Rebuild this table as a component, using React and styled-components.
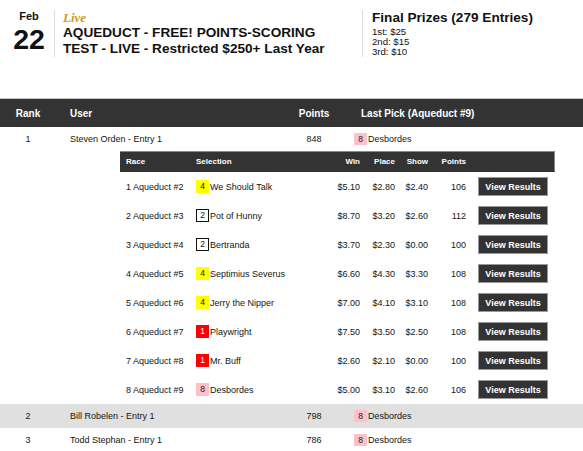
import React from "react";
import styled, { createGlobalStyle } from "styled-components";

const GlobalStyle = createGlobalStyle`
  body {
    margin: 0;
    background: #fff;
    font-family: "Liberation Sans", Arial, sans-serif;
    color: #151515;
  }
`;

const saddle = {
  1: { bg: "#ff0000", fg: "#fff", border: "#ff0000" },
  2: { bg: "#fff", fg: "#111", border: "#111" },
  4: { bg: "#ffff00", fg: "#111", border: "#ffff00" },
  8: { bg: "#ffc0cb", fg: "#222", border: "#ffc0cb" },
};

const picks = [
  { race: "1 Aqueduct #2", pp: 4, horse: "We Should Talk", win: "$5.10", place: "$2.80", show: "$2.40", points: 106 },
  { race: "2 Aqueduct #3", pp: 2, horse: "Pot of Hunny", win: "$8.70", place: "$3.20", show: "$2.60", points: 112 },
  { race: "3 Aqueduct #4", pp: 2, horse: "Bertranda", win: "$3.70", place: "$2.30", show: "$0.00", points: 100 },
  { race: "4 Aqueduct #5", pp: 4, horse: "Septimius Severus", win: "$6.60", place: "$4.30", show: "$3.30", points: 108 },
  { race: "5 Aqueduct #6", pp: 4, horse: "Jerry the Nipper", win: "$7.00", place: "$4.10", show: "$3.10", points: 108 },
  { race: "6 Aqueduct #7", pp: 1, horse: "Playwright", win: "$7.50", place: "$3.50", show: "$2.50", points: 108 },
  { race: "7 Aqueduct #8", pp: 1, horse: "Mr. Buff", win: "$2.60", place: "$2.10", show: "$0.00", points: 100 },
  { race: "8 Aqueduct #9", pp: 8, horse: "Desbordes", win: "$5.00", place: "$3.10", show: "$2.60", points: 106 },
];

const entries = [
  { rank: 1, user: "Steven Orden - Entry 1", points: 848, pp: 8, horse: "Desbordes", open: true },
  { rank: 2, user: "Bill Robelen - Entry 1", points: 798, pp: 8, horse: "Desbordes" },
  { rank: 3, user: "Todd Stephan - Entry 1", points: 786, pp: 8, horse: "Desbordes" },
];

const Page = styled.div`
  width: 583px;
`;

const Header = styled.div`
  display: flex;
  align-items: flex-start;
  height: 98px;
  padding-top: 10px;
  box-sizing: border-box;
`;

const DateBlock = styled.div`
  width: 50px;
  margin-left: 4px;
  height: 47px;
  border-right: 1px solid #ddd;
  display: flex;
  flex-direction: column;
  align-items: center;
  font-weight: bold;
  color: #111;
`;

const Month = styled.div`
  font-size: 11px;
  line-height: 13px;
`;

const Day = styled.div`
  font-size: 28.5px;
  line-height: 28px;
  margin-top: 2px;
`;

const TitleBlock = styled.div`
  width: 307px;
  height: 47px;
  padding-left: 8px;
  box-sizing: border-box;
`;

const LiveTag = styled.div`
  font-family: "Liberation Serif", "DejaVu Serif", serif;
  font-style: italic;
  font-weight: bold;
  font-size: 13px;
  line-height: 15px;
  color: #d19d1c;
`;

const Title = styled.div`
  font-size: 13.6px;
  line-height: 16px;
  font-weight: bold;
  color: #111;
`;

const PrizeBlock = styled.div`
  height: 47px;
  padding-left: 9px;
  border-left: 1px solid #ddd;
`;

const PrizeTitle = styled.div`
  font-size: 13.6px;
  line-height: 16px;
  font-weight: bold;
  color: #111;
`;

const PrizeList = styled.div`
  margin-top: 1px;
  font-size: 9.6px;
  line-height: 10px;
  color: #111;
`;

const Board = styled.table`
  width: 583px;
  border-collapse: collapse;
  table-layout: fixed;
`;

const HeadCell = styled.th`
  height: 28px;
  padding: 0 0 0 ${({ $pad }) => $pad || 0}px;
  background: #333;
  border-top: 1px solid #c4c4c4;
  color: #fff;
  font-size: 10px;
  font-weight: bold;
  text-align: ${({ $align }) => $align || "left"};
`;

const Row = styled.tr`
  background: ${({ $shade }) => ($shade ? "#e0e0e1" : "#fff")};
`;

const Cell = styled.td`
  height: 24px;
  padding: 0 0 0 ${({ $pad }) => $pad || 0}px;
  font-size: 9px;
  text-align: ${({ $align }) => $align || "left"};
  vertical-align: middle;
  white-space: nowrap;
`;

const DetailCell = styled.td`
  padding: 0;
`;

const Picks = styled.table`
  width: 434px;
  margin-left: 120px;
  border-collapse: collapse;
  table-layout: fixed;
`;

const PickHead = styled.th`
  height: 19px;
  padding: 0 ${({ $align }) => ($align === "right" ? "6px" : "0")} 0
    ${({ $align }) => ($align === "right" ? "0" : "6px")};
  background: #333;
  border-top: 1px solid #8a8a8a;
  border-bottom: 1px solid #333;
  color: #fff;
  font-size: 8px;
  font-weight: bold;
  text-align: ${({ $align }) => $align || "left"};
  &:last-child {
    border-right: 1px solid #8a8a8a;
  }
`;

const PickCell = styled.td`
  height: 29px;
  padding: 0 ${({ $align }) => ($align === "right" ? "6px" : "0")} 0
    ${({ $align }) => ($align === "right" ? "0" : "6px")};
  font-size: 9px;
  text-align: ${({ $align }) => $align || "left"};
  vertical-align: middle;
  white-space: nowrap;
`;

const ButtonCell = styled.td`
  padding: 0 6px;
  vertical-align: middle;
`;

const ViewButton = styled.button`
  display: block;
  width: 70px;
  height: 19px;
  padding: 0;
  background: #333;
  border: 1px solid #999;
  color: #fff;
  font-family: "Liberation Sans", Arial, sans-serif;
  font-size: 9px;
  font-weight: bold;
`;

const Selection = styled.span`
  display: inline-flex;
  align-items: center;
`;

const Saddle = styled.span`
  display: inline-block;
  width: 13px;
  height: 12.5px;
  margin-right: 1px;
  box-sizing: border-box;
  border: 1px solid ${({ $c }) => $c.border};
  background: ${({ $c }) => $c.bg};
  color: ${({ $c }) => $c.fg};
  font-size: 8.5px;
  line-height: 10.5px;
  text-align: center;
`;

const Pick = ({ pp, horse }) => (
  <Selection>
    <Saddle $c={saddle[pp]}>{pp}</Saddle>
    {horse}
  </Selection>
);

const PickTable = () => (
  <Picks>
    <colgroup>
      <col style={{ width: 70 }} />
      <col style={{ width: 140 }} />
      <col style={{ width: 36 }} />
      <col style={{ width: 35 }} />
      <col style={{ width: 33 }} />
      <col style={{ width: 38 }} />
      <col style={{ width: 82 }} />
    </colgroup>
    <thead>
      <tr>
        <PickHead>Race</PickHead>
        <PickHead>Selection</PickHead>
        <PickHead $align="right">Win</PickHead>
        <PickHead $align="right">Place</PickHead>
        <PickHead $align="right">Show</PickHead>
        <PickHead $align="right">Points</PickHead>
        <PickHead />
      </tr>
    </thead>
    <tbody>
      {picks.map((p) => (
        <tr key={p.race}>
          <PickCell>{p.race}</PickCell>
          <PickCell>
            <Pick pp={p.pp} horse={p.horse} />
          </PickCell>
          <PickCell $align="right">{p.win}</PickCell>
          <PickCell $align="right">{p.place}</PickCell>
          <PickCell $align="right">{p.show}</PickCell>
          <PickCell $align="right">{p.points}</PickCell>
          <ButtonCell>
            <ViewButton>View Results</ViewButton>
          </ButtonCell>
        </tr>
      ))}
    </tbody>
  </Picks>
);

export default function App() {
  return (
    <Page>
      <GlobalStyle />
      <Header>
        <DateBlock>
          <Month>Feb</Month>
          <Day>22</Day>
        </DateBlock>
        <TitleBlock>
          <LiveTag>Live</LiveTag>
          <Title>AQUEDUCT - FREE! POINTS-SCORING</Title>
          <Title>TEST - LIVE - Restricted $250+ Last Year</Title>
        </TitleBlock>
        <PrizeBlock>
          <PrizeTitle>Final Prizes (279 Entries)</PrizeTitle>
          <PrizeList>
            <div>1st: $25</div>
            <div>2nd: $15</div>
            <div>3rd: $10</div>
          </PrizeList>
        </PrizeBlock>
      </Header>

      <Board>
        <colgroup>
          <col style={{ width: 56 }} />
          <col style={{ width: 234 }} />
          <col style={{ width: 48 }} />
          <col style={{ width: 245 }} />
        </colgroup>
        <thead>
          <tr>
            <HeadCell $align="center">Rank</HeadCell>
            <HeadCell $pad={14}>User</HeadCell>
            <HeadCell $align="center">Points</HeadCell>
            <HeadCell $pad={23}>Last Pick (Aqueduct #9)</HeadCell>
          </tr>
        </thead>
        <tbody>
          {entries.map((e, i) => (
            <React.Fragment key={e.rank}>
              <Row $shade={i % 2 === 1}>
                <Cell $align="center">{e.rank}</Cell>
                <Cell $pad={14}>{e.user}</Cell>
                <Cell $align="center">{e.points}</Cell>
                <Cell $pad={16}>
                  <Pick pp={e.pp} horse={e.horse} />
                </Cell>
              </Row>
              {e.open && (
                <tr>
                  <DetailCell colSpan={4}>
                    <PickTable />
                  </DetailCell>
                </tr>
              )}
            </React.Fragment>
          ))}
        </tbody>
      </Board>
    </Page>
  );
}
